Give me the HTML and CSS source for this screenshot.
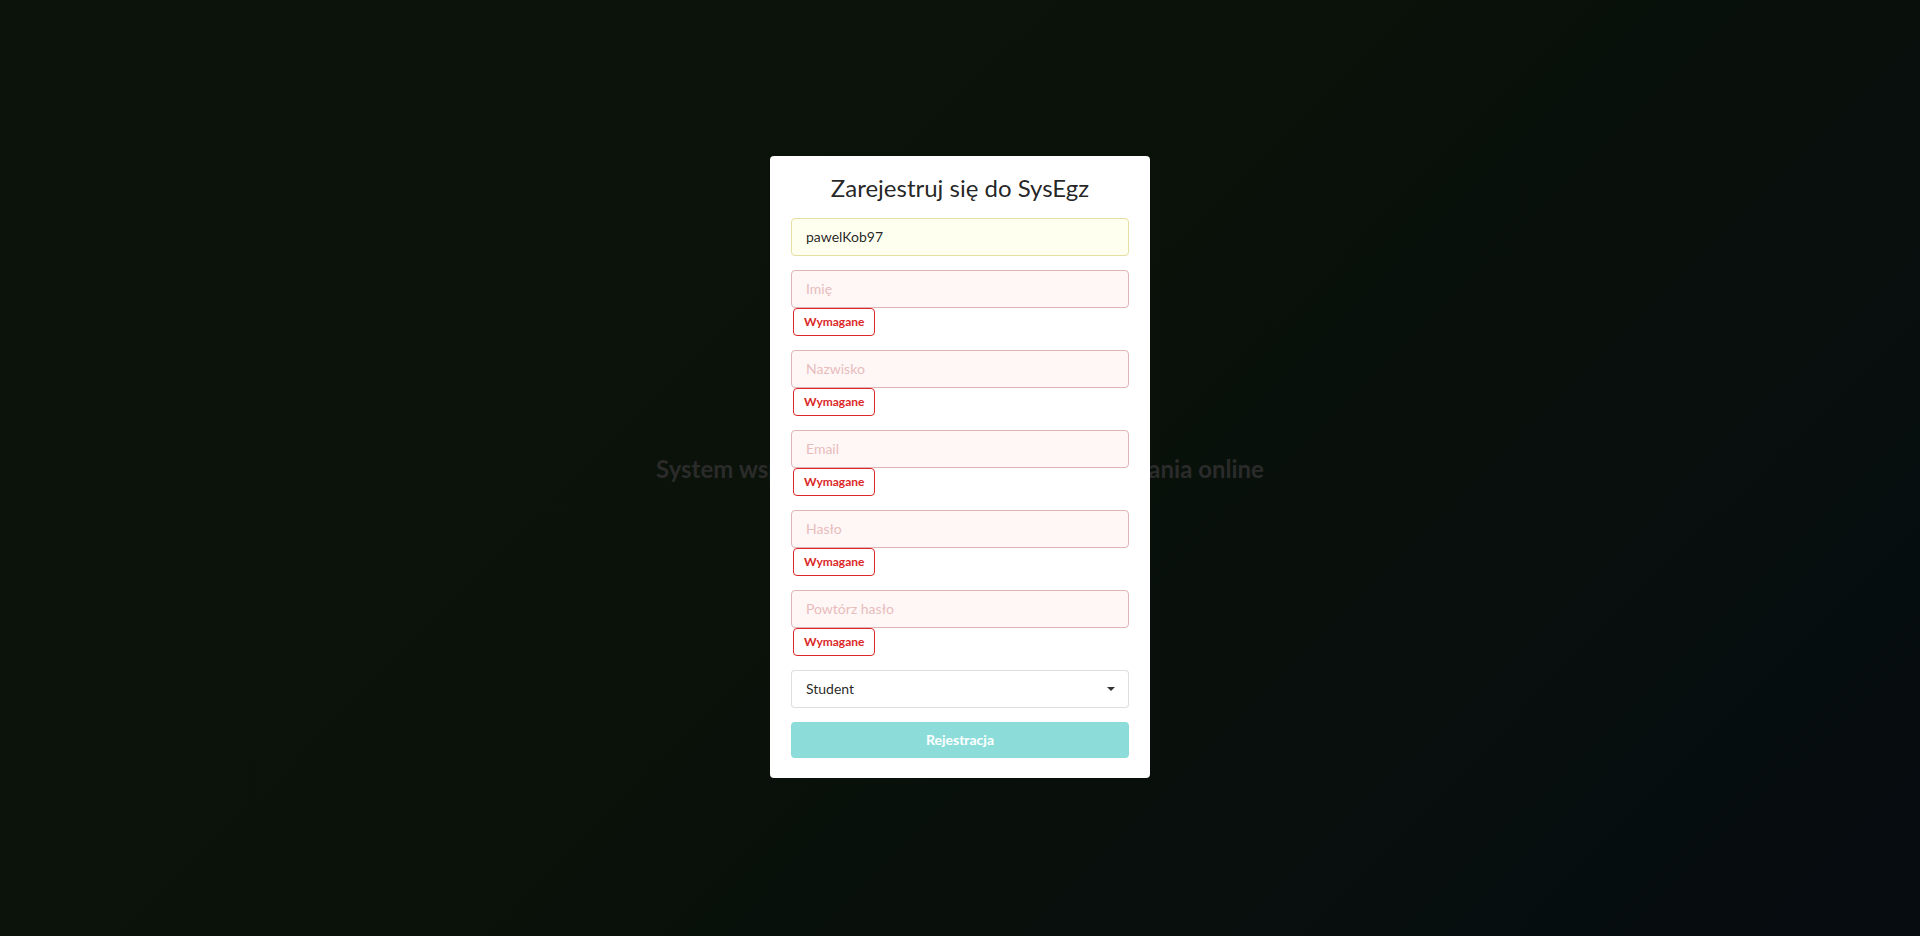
FILE: index.html
```html
<!DOCTYPE html>
<html lang="pl">
<head>
<meta charset="utf-8">
<title>SysEgz - Rejestracja</title>
<link rel="stylesheet" href="styles.css">
</head>
<body>
<div class="page">
  <h1 class="hero">System wspomagający organizację egzaminowania online</h1>
</div>
<div class="dimmer">
  <div class="modal">
    <h2 class="modal-title">Zarejestruj się do SysEgz</h2>
    <form class="form">
      <div class="field">
        <input class="input autofill" type="text" value="pawelKob97">
      </div>
      <div class="field">
        <input class="input error" type="text" placeholder="Imię">
        <div class="prompt">Wymagane</div>
      </div>
      <div class="field">
        <input class="input error" type="text" placeholder="Nazwisko">
        <div class="prompt">Wymagane</div>
      </div>
      <div class="field">
        <input class="input error" type="text" placeholder="Email">
        <div class="prompt">Wymagane</div>
      </div>
      <div class="field">
        <input class="input error" type="password" placeholder="Hasło">
        <div class="prompt">Wymagane</div>
      </div>
      <div class="field">
        <input class="input error" type="password" placeholder="Powtórz hasło">
        <div class="prompt">Wymagane</div>
      </div>
      <div class="field">
        <div class="select">
          <span class="select-text">Student</span>
          <span class="caret"></span>
        </div>
      </div>
      <button class="button" type="button" disabled>Rejestracja</button>
    </form>
  </div>
</div>
</body>
</html>
```

FILE: styles.css
```css
* {
  box-sizing: border-box;
}

html, body {
  margin: 0;
  height: 100%;
}

body {
  font-family: Lato, "Helvetica Neue", Arial, sans-serif;
  background: linear-gradient(135deg, #0b130a 0%, #0a1209 45%, #080f0c 70%, #060c10 100%);
  overflow: hidden;
}

.page {
  height: 936px;
  display: flex;
  align-items: center;
  justify-content: center;
}

.hero {
  margin: 0;
  font-size: 24px;
  font-weight: 700;
  color: #2a2b2a;
  line-height: 31px;
  white-space: nowrap;
}

.dimmer {
  position: fixed;
  inset: 0;
  display: flex;
  align-items: center;
  justify-content: center;
}

.modal {
  width: 380px;
  background: #ffffff;
  border-radius: 4px;
  padding: 17px 21px 20px;
  transform: translateY(-1px);
}

.modal-title {
  margin: 0 0 14px;
  text-align: center;
  font-size: 24px;
  font-weight: 400;
  line-height: 30.86px;
  color: rgba(0, 0, 0, 0.87);
}

.form {
  display: flex;
  flex-direction: column;
}

.field {
  display: flex;
  flex-direction: column;
  align-items: flex-start;
  margin-bottom: 14px;
}

.input {
  width: 100%;
  height: 38px;
  margin: 0;
  padding: 0 14px;
  font-family: Lato, "Helvetica Neue", Arial, sans-serif;
  font-size: 14px;
  color: rgba(0, 0, 0, 0.87);
  border: 1px solid rgba(34, 36, 38, 0.15);
  border-radius: 4px;
  outline: none;
  background: #ffffff;
}

.input.autofill {
  background: #fffff0;
  border-color: #e5dfa1;
}

.input.error {
  background: #fff6f6;
  border-color: #e0b4b4;
}

.input.error::placeholder {
  color: #e7bdbc;
  opacity: 1;
}

.prompt {
  margin-left: 2px;
  height: 28px;
  padding: 7px 10px;
  font-size: 12px;
  line-height: 12px;
  font-weight: 700;
  color: #db2828;
  background: #ffffff;
  border: 1px solid #db2828;
  border-radius: 4px;
}

.select {
  width: 100%;
  height: 38px;
  padding: 0 13px 0 14px;
  display: flex;
  align-items: center;
  justify-content: space-between;
  border: 1px solid rgba(34, 36, 38, 0.15);
  border-radius: 4px;
  background: #ffffff;
  font-size: 14px;
  color: rgba(0, 0, 0, 0.87);
}

.caret {
  width: 0;
  height: 0;
  border-left: 4px solid transparent;
  border-right: 4px solid transparent;
  border-top: 4px solid rgba(0, 0, 0, 0.8);
  margin-top: 1px;
}

.button {
  height: 36px;
  width: 100%;
  border: none;
  border-radius: 4px;
  background: #8cddda;
  color: #ffffff;
  font-family: Lato, "Helvetica Neue", Arial, sans-serif;
  font-size: 14px;
  font-weight: 700;
  padding: 0;
}
```
